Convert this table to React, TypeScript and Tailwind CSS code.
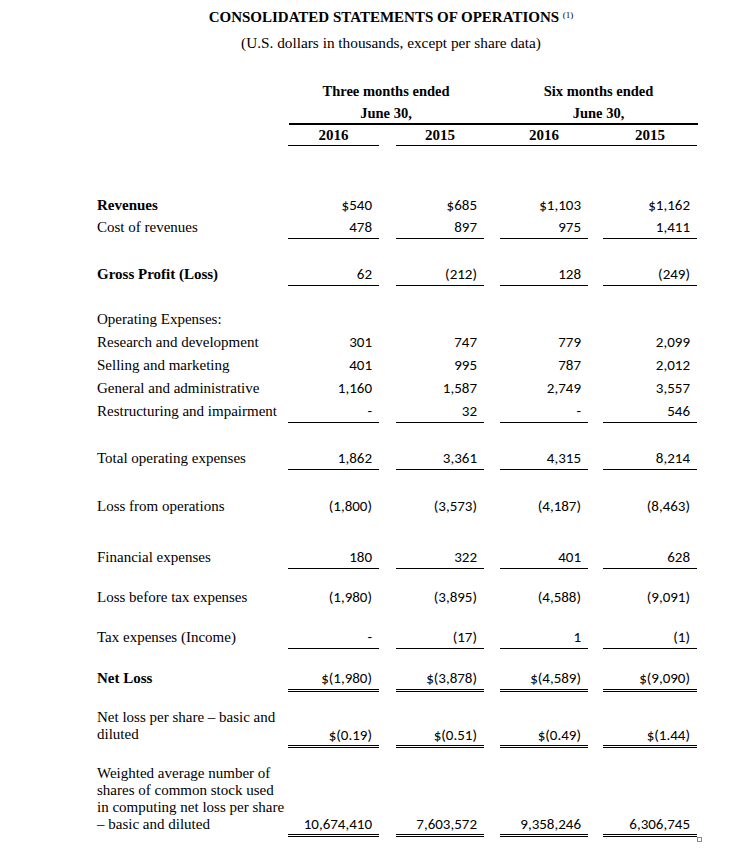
import React from "react";

type V = [string, string, string, string];

const NUM = "font-['Liberation_Sans_Narrow','Carlito','Arial_Narrow',sans-serif] text-[15px] text-right pr-[7px] text-black";

function Cells({ vals, cellCls }: { vals: V; cellCls: string }) {
  return (
    <>
      <div className={`w-[91px] ${NUM} ${cellCls}`}>{vals[0]}</div>
      <div className={`ml-[17px] w-[88px] ${NUM} ${cellCls}`}>{vals[1]}</div>
      <div className={`ml-[16px] w-[88px] ${NUM} ${cellCls}`}>{vals[2]}</div>
      <div className={`ml-[15px] w-[94px] ${NUM} ${cellCls}`}>{vals[3]}</div>
    </>
  );
}

function Row({
  label,
  vals,
  bold,
  rowCls,
  cellCls,
  lead,
}: {
  label: string;
  vals?: V;
  bold?: boolean;
  rowCls: string;
  cellCls?: string;
  lead: string;
}) {
  return (
    <div className={`flex items-start pl-[97px] ${rowCls}`}>
      <div className={`w-[191px] text-[15px] ${lead} ${bold ? "font-bold" : ""} whitespace-nowrap`}>{label}</div>
      {vals && <Cells vals={vals} cellCls={`${lead} ${cellCls ?? ""}`} />}
    </div>
  );
}

export default function App() {
  return (
    <div className="w-[729px] h-[861px] bg-white text-black font-['Liberation_Serif','Times_New_Roman',serif] overflow-hidden">
      {/* Title */}
      <div className="pt-[7px] pl-[53px] text-center">
        <div className="text-[15px] font-bold leading-[20px]">
          CONSOLIDATED STATEMENTS OF OPERATIONS{" "}
          <sup className="text-[9px] font-normal">(1)</sup>
        </div>
        <div className="mt-[6px] text-[15.3px] leading-[20px]">(U.S. dollars in thousands, except per share data)</div>
      </div>

      {/* Column group headers */}
      <div className="mt-[28px] flex pl-[288px] text-[14.5px] font-bold leading-[20px]">
        <div className="w-[196px] text-center">Three months ended</div>
        <div className="ml-[16px] w-[197px] text-center">Six months ended</div>
      </div>
      <div className="mt-[2px] flex pl-[288px] text-[14.5px] font-bold leading-[20px]">
        <div className="w-[196px] text-center">June 30,</div>
        <div className="ml-[16px] w-[197px] text-center">June 30,</div>
      </div>
      <div className="ml-[289px] w-[409px] h-[2px] bg-black" />
      <div className="flex pl-[288px] text-[15px] font-bold leading-[20px]">
        <div className="w-[91px] text-center border-b border-black h-[21px]">2016</div>
        <div className="ml-[17px] flex w-[301px] border-b border-black h-[21px]">
          <div className="w-[88px] text-center">2015</div>
          <div className="ml-[16px] w-[88px] text-center">2016</div>
          <div className="ml-[15px] w-[94px] text-center">2015</div>
        </div>
      </div>

      {/* Body */}
      <Row label="Revenues" bold vals={["$540", "$685", "$1,103", "$1,162"]} rowCls="mt-[48px]" lead="leading-[22px]" />
      <Row
        label="Cost of revenues"
        vals={["478", "897", "975", "1,411"]}
        rowCls=""
        lead="leading-[22px]"
        cellCls="h-[23px] border-b border-black"
      />
      <Row
        label="Gross Profit (Loss)"
        bold
        vals={["62", "(212)", "128", "(249)"]}
        rowCls="mt-[24px]"
        lead="leading-[22px]"
        cellCls="h-[23px] border-b border-black"
      />
      <Row label="Operating Expenses:" rowCls="mt-[22px] h-[23px]" lead="leading-[23px]" />
      <Row label="Research and development" vals={["301", "747", "779", "2,099"]} rowCls="h-[23px]" lead="leading-[23px]" />
      <Row label="Selling and marketing" vals={["401", "995", "787", "2,012"]} rowCls="h-[23px]" lead="leading-[23px]" />
      <Row label="General and administrative" vals={["1,160", "1,587", "2,749", "3,557"]} rowCls="h-[23px]" lead="leading-[23px]" />
      <Row
        label="Restructuring and impairment"
        vals={["-", "32", "-", "546"]}
        rowCls="h-[23px]"
        lead="leading-[22px]"
        cellCls="h-[23px] border-b border-black"
      />
      <Row
        label="Total operating expenses"
        vals={["1,862", "3,361", "4,315", "8,214"]}
        rowCls="mt-[24px]"
        lead="leading-[22px]"
        cellCls="h-[23px] border-b border-black"
      />
      <Row label="Loss from operations" vals={["(1,800)", "(3,573)", "(4,187)", "(8,463)"]} rowCls="mt-[25px]" lead="leading-[22px]" />
      <Row
        label="Financial expenses"
        vals={["180", "322", "401", "628"]}
        rowCls="mt-[29px]"
        lead="leading-[22px]"
        cellCls="h-[23px] border-b border-black"
      />
      <Row label="Loss before tax expenses" vals={["(1,980)", "(3,895)", "(4,588)", "(9,091)"]} rowCls="mt-[17px]" lead="leading-[22px]" />
      <Row
        label="Tax expenses (Income)"
        vals={["-", "(17)", "1", "(1)"]}
        rowCls="mt-[18px]"
        lead="leading-[22px]"
        cellCls="h-[23px] border-b border-black"
      />
      <Row
        label="Net Loss"
        bold
        vals={["$(1,980)", "$(3,878)", "$(4,589)", "$(9,090)"]}
        rowCls="mt-[18px]"
        lead="leading-[22px]"
        cellCls="h-[25px] border-b-[3px] border-double border-black"
      />

      {/* Net loss per share */}
      <div className="mt-[17px] flex items-start pl-[97px]">
        <div className="w-[191px] text-[15px] leading-[17px]">
          Net loss per share – basic and
          <br />
          diluted
        </div>
        <div className="mt-[17px] flex">
          <Cells
            vals={["$(0.19)", "$(0.51)", "$(0.49)", "$(1.44)"]}
            cellCls="leading-[19px] h-[22px] border-b-[3px] border-double border-black"
          />
        </div>
      </div>

      {/* Weighted average */}
      <div className="mt-[17px] flex items-start pl-[97px]">
        <div className="w-[191px] text-[15px] leading-[17px]">
          Weighted average number of
          <br />
          shares of common stock used
          <br />
          in computing net loss per share
          <br />– basic and diluted
        </div>
        <div className="mt-[50px] flex">
          <Cells
            vals={["10,674,410", "7,603,572", "9,358,246", "6,306,745"]}
            cellCls="leading-[19px] h-[22px] border-b-[3px] border-double border-black"
          />
        </div>
        <div className="mt-[72px] w-[5px] h-[5px] border border-[#8a8a8a]" />
      </div>
    </div>
  );
}
